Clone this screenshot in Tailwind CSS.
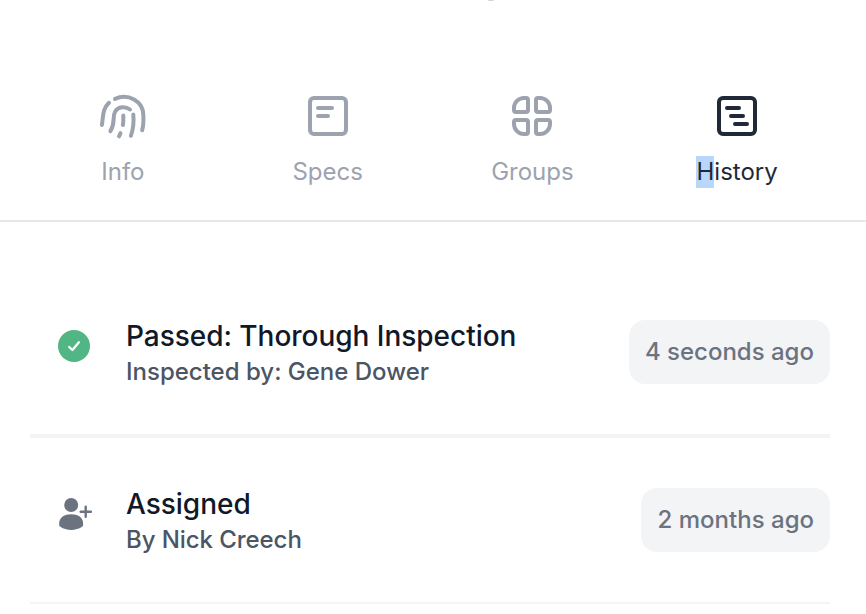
<!DOCTYPE html>
<html lang="en">
<head>
<meta charset="utf-8">
<title>History</title>
<script src="https://cdn.jsdelivr.net/npm/@tailwindcss/browser@4"></script>
</head>
<body class="bg-white font-['Inter',sans-serif] w-[866px] h-[614px] overflow-hidden">
<div class="h-[2px] flex justify-center pl-[116px]"><div class="w-[6px] h-px bg-gray-300 rounded-b"></div></div>
<nav class="h-[220px] border-b-2 border-[#e5e7eb] pt-[90px] pl-[20.5px] pr-[26.5px] grid grid-cols-4 text-2xl text-[#9ca3af]">
  <a class="flex flex-col items-center gap-4">
    <svg class="size-12" viewBox="0 0 48 48" fill="none" stroke="currentColor" stroke-width="4" stroke-linecap="round"><path d="M2.9 33C4.4 24 3.2 17 10 10.8M16 6.9C29 .9 44.4 9 44.4 23.5V29C44.4 32.5 44 35 43.2 38.2M11.4 39.3C17 29.5 12.8 25.5 16.2 19.5C19 14.6 26.3 13.9 31 17.5M34.3 22.5C35 30 34.3 37 31.9 43.8M24.3 23.6V27.5C24.3 29.5 24.2 31.2 23.9 33.1M21.5 41.2L20 44.3"/></svg>
    <span>Info</span>
  </a>
  <a class="flex flex-col items-center gap-4">
    <svg class="size-12" viewBox="0 0 48 48" fill="none" stroke="currentColor" stroke-width="4" stroke-linecap="round"><rect x="6" y="6" width="36" height="36" rx="4"/><path d="M14 16h14M14 24h10"/></svg>
    <span>Specs</span>
  </a>
  <a class="flex flex-col items-center gap-4">
    <svg class="size-12" viewBox="0 0 48 48" fill="none" stroke="currentColor" stroke-width="4"><path d="M6 18V16A10 10 0 0 1 16 6H18A2 2 0 0 1 20 8V18A2 2 0 0 1 18 20H8A2 2 0 0 1 6 18ZM42 18V16A10 10 0 0 0 32 6H30A2 2 0 0 0 28 8V18A2 2 0 0 0 30 20H40A2 2 0 0 0 42 18ZM6 30V32A10 10 0 0 0 16 42H18A2 2 0 0 0 20 40V30A2 2 0 0 0 18 28H8A2 2 0 0 0 6 30ZM42 30V32A10 10 0 0 1 32 42H30A2 2 0 0 1 28 40V30A2 2 0 0 1 30 28H40A2 2 0 0 1 42 30Z"/></svg>
    <span>Groups</span>
  </a>
  <a class="flex flex-col items-center gap-4 text-[#1f2937]">
    <svg class="size-12" viewBox="0 0 48 48" fill="none" stroke="currentColor" stroke-width="4" stroke-linecap="round"><rect x="6" y="6" width="36" height="36" rx="4"/><path d="M14 16h12M18 24h12M22 32h12"/></svg>
    <span><span class="inline-block h-8 bg-[#b9d7fb] pl-px -ml-px">H</span>istory</span>
  </a>
</nav>
<main class="pl-[30px] pr-9 pt-[50px]">
  <section class="h-[166px] border-b-4 border-[#f3f4f6] flex pt-12">
    <svg class="size-8 ml-7 mt-[10px]" viewBox="0 0 32 32" fill="none"><circle cx="16" cy="16" r="16" fill="#52b684"/><path d="M11.2 17L14.4 20L20.9 12.3" stroke="white" stroke-width="2.3" stroke-linecap="round" stroke-linejoin="round"/></svg>
    <div class="ml-9 font-medium">
      <h2 class="text-[28px] leading-8 tracking-[-0.03px] text-[#111827]">Passed: Thorough Inspection</h2>
      <p class="text-2xl leading-[40px] text-[#4b5563]">Inspected by: Gene Dower</p>
    </div>
    <div class="ml-auto h-16 px-4 rounded-2xl bg-[#f3f4f6] text-[#6b7280] text-2xl leading-[64px] font-medium">4 seconds ago</div>
  </section>
  <section class="h-[166px] border-b-2 border-[#f3f4f6] flex pt-[50px]">
    <svg class="w-9 h-8 ml-7 mt-[10px]" viewBox="0 0 36 32"><g fill="#6b7280"><circle cx="13.2" cy="7" r="7"/><path d="M1.3 27.5C.2 20 6 16.3 13.2 16.3S26.2 20 25 27.5Q25 28.2 24 28.8C18 33 8.3 33 2.4 28.8Q1.3 28.2 1.3 27.5Z"/></g><path d="M27.7 8.8V18.8M22.7 13.8H32.9" fill="none" stroke="#6b7280" stroke-width="2.4" stroke-linecap="round"/></svg>
    <div class="ml-8 font-medium">
      <h2 class="text-[28px] leading-8 tracking-[-0.03px] text-[#111827]">Assigned</h2>
      <p class="text-2xl leading-[40px] tracking-[-0.07px] text-[#4b5563]">By Nick Creech</p>
    </div>
    <div class="ml-auto h-16 w-[189px] px-4 rounded-2xl bg-[#f3f4f6] text-[#6b7280] text-2xl leading-[64px] font-medium whitespace-nowrap text-right">2 months ago</div>
  </section>
</main>
</body>
</html>
